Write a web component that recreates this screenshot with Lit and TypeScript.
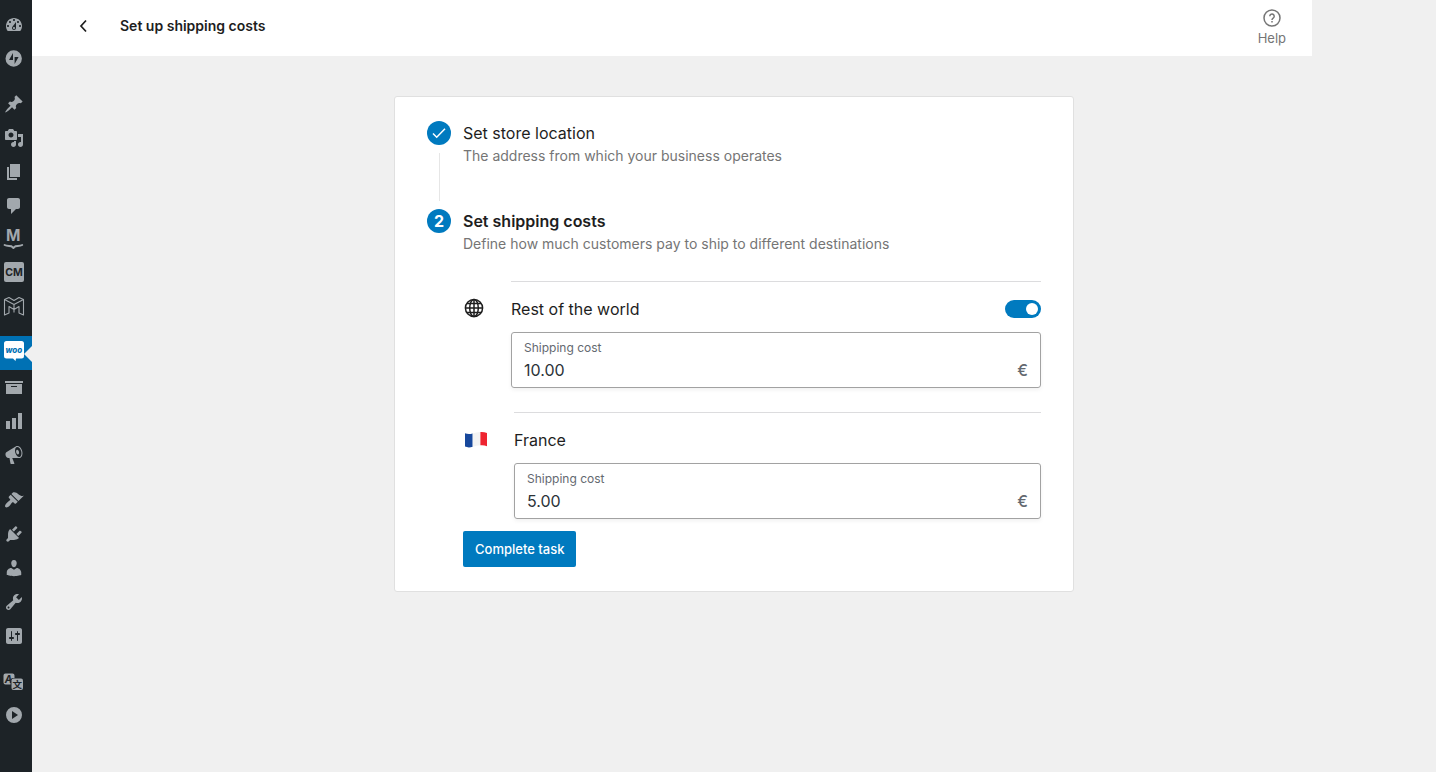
import { LitElement, html, svg, css } from "lit";
import { customElement, state } from "lit/decorators.js";
import { classMap } from "lit/directives/class-map.js";

type MenuItem = { label: string; icon: unknown; active?: boolean };

const path = (d: string) => svg`<path fill-rule="evenodd" d=${d}></path>`;

const MENU: MenuItem[][] = [
  [
    {
      label: "Dashboard",
      icon: path(
        "M3.76 16h12.48c1.1-1.37 1.76-3.11 1.76-5 0-4.42-3.58-8-8-8s-8 3.58-8 8c0 1.89.66 3.63 1.76 5zM10 4c.55 0 1 .45 1 1s-.45 1-1 1-1-.45-1-1 .45-1 1-1zM6 6c.55 0 1 .45 1 1s-.45 1-1 1-1-.45-1-1 .45-1 1-1zm8 0c.55 0 1 .45 1 1s-.45 1-1 1-1-.45-1-1 .45-1 1-1zm-5.37 5.55L12 7v6c0 1.1-.9 2-2 2s-2-.9-2-2c0-.57.24-1.08.63-1.45zM4 10c.55 0 1 .45 1 1s-.45 1-1 1-1-.45-1-1 .45-1 1-1zm12 0c.55 0 1 .45 1 1s-.45 1-1 1-1-.45-1-1 .45-1 1-1zm-5 3c0-.55-.45-1-1-1s-1 .45-1 1 .45 1 1 1 1-.45 1-1z",
      ),
    },
    {
      label: "Jetpack",
      icon: path(
        "M9.700 1.3a8.2 8.2 0 1 0 0 16.4a8.2 8.2 0 1 0 0-16.4zM9 4V11H5zM10.600 15V8h4z",
      ),
    },
  ],
  [
    {
      label: "Posts",
      icon: path(
        "M10.440 3.020l1.820-1.820 6.360 6.350-1.830 1.820c-1.050-.680-2.480-.570-3.410.360l-.750.750c-.920.930-1.040 2.350-.350 3.410l-1.830 1.820-2.410-2.410-2.800 2.790c-.420.420-3.380 2.710-3.800 2.290s1.860-3.390 2.280-3.810l2.790-2.790L4.100 9.360l1.830-1.820c1.050.690 2.480.570 3.400-.360l.750-.750c.930-.920 1.050-2.350.360-3.410z",
      ),
    },
    {
      label: "Media",
      icon: path(
        "M13 11V4c0-.55-.45-1-1-1h-1.670L9 1H5L3.670 3H2c-.55 0-1 .45-1 1v7c0 .55.45 1 1 1h10c.55 0 1-.45 1-1zM7 4.500c1.380 0 2.500 1.120 2.500 2.500S8.380 9.500 7 9.500 4.500 8.380 4.500 7 5.620 4.500 7 4.500zM14 6h5v10.500c0 1.380-1.120 2.500-2.500 2.500S14 17.880 14 16.500s1.120-2.500 2.500-2.500c.17 0 .34.02.5.05V9h-3V6zm-4 8.050V13h2v3.500c0 1.380-1.120 2.500-2.500 2.500S7 17.880 7 16.500 8.120 14 9.500 14c.17 0 .34.02.5.05z",
      ),
    },
    { label: "Pages", icon: path("M6 15V2h10v13H6zm-1 1h8v2H3V5h2v11z") },
    {
      label: "Comments",
      icon: path(
        "M5 2h9c1.100 0 2 .9 2 2v7c0 1.100-.9 2-2 2h-2l-5 5v-5H5c-1.100 0-2-.9-2-2V4c0-1.100.9-2 2-2z",
      ),
    },
    {
      label: "MailPoet",
      icon: svg`
        <text x="9.200" y="11" font-size="15.500" font-weight="700" text-anchor="middle">M</text>
        <path fill="none" stroke="currentColor" stroke-width="2" stroke-linecap="round" stroke-linejoin="round"
          d="M.6 15c2.500 1.400 5 .6 6.800 1.200l2 1.700 2-1.700c1.800-.6 4.300.2 6.800-1.200"></path>`,
    },
    {
      label: "Customers",
      icon: svg`
        <rect x="0" y="-2" width="20" height="20" rx="2"></rect>
        <text class="cutout" x="10" y="12" font-size="10.500" font-weight="700" text-anchor="middle">CM</text>`,
    },
    {
      label: "Mailchimp",
      icon: svg`<path fill="none" stroke="currentColor" stroke-width="1.100" stroke-linejoin="round"
        d="M.5 1.500L5-.500l5 3 5-3 4.500 2V17L15 15V8.500L10 11.500 5 8.500V15L.5 17zM.5 1.500L10 6.500l9.500-5M10 6.500v8"></path>`,
    },
  ],
  [
    {
      label: "WooCommerce",
      active: true,
      icon: svg`
        <path d="M2.500-2h15A2.500 2.500 0 0 1 20 .5v12.500a2.500 2.500 0 0 1-2.500 2.500H12l-.5 2.500L9 15.500H2.500A2.500 2.500 0 0 1 0 13V.5A2.500 2.500 0 0 1 2.500-2z"></path>
        <text class="brand" x="9.800" y="9.500" font-size="8" font-style="italic" font-weight="800" text-anchor="middle">woo</text>`,
    },
    { label: "Products", icon: path("M19 4v2H1V4h18zM2 7h16v10H2V7zm11 3V9H7v1h6z") },
    { label: "Analytics", icon: path("M18 18V2h-4v16h4zm-6 0V7H8v11h4zm-6 0v-8H2v8h4z") },
    {
      label: "Marketing",
      icon: path(
        "M18.150 5.940c.46 1.620.38 3.220-.02 4.480-.42 1.280-1.260 2.180-2.300 2.480-.16.06-.26.06-.4.06-.06.02-.12.02-.18.02-.06.02-.14.02-.22.02h-6.800l2.220 5.500c.02.14-.06.26-.14.34-.08.1-.24.16-.34.16H6.950c-.1 0-.26-.06-.34-.16-.08-.08-.16-.2-.14-.34l-1-5.500H4.250l-.02-.02c-.5.06-1.080-.18-1.540-.62s-.88-1.080-1.060-1.880c-.24-.8-.2-1.560-.02-2.200.18-.62.58-1.080 1.060-1.300l.02-.02 9-5.400c.1-.06.18-.1.24-.16.06-.04.14-.08.24-.12.16-.08.28-.12.5-.18 1.040-.3 2.240.1 3.220.98s1.840 2.240 2.260 3.860zm-2.580 5.980h-.02c.4-.1.74-.34 1.040-.7.58-.7.86-1.760.86-3.040 0-.64-.1-1.300-.28-1.980-.34-1.360-1.020-2.500-1.780-3.240s-1.680-1.100-2.460-.88c-.82.22-1.400.96-1.700 2-.32 1.040-.28 2.360.06 3.720.38 1.360 1 2.500 1.800 3.240.78.74 1.620 1.100 2.480.88zm-2.540-7.080c.22-.04.42-.02.62.04.38.16.76.48 1.020 1s.42 1.200.42 1.780c0 .3-.04.56-.12.8-.18.48-.44.84-.86.94-.34.1-.8-.06-1.140-.4s-.64-.86-.78-1.500c-.18-.62-.12-1.240.02-1.720s.48-.84.82-.94z",
      ),
    },
  ],
  [
    {
      label: "Appearance",
      icon: path(
        "M14.480 11.060L7.410 3.990l1.500-1.500c.5-.56 2.300-.47 3.510.32 1.210.8 1.430 1.280 2.910 2.100 1.180.64 2.450 1.260 4.450.85zm-.71.71L6.700 4.700 4.930 6.470c-.39.39-.39 1.020 0 1.410l1.060 1.060c.39.39.39 1.030 0 1.420-.6.6-1.430 1.110-2.210 1.690-.35.26-.7.53-1.010.84C1.430 14.230.4 16.080 1.400 17.070c.99 1 2.840-.03 4.180-1.360.31-.31.58-.66.85-1.020.57-.78 1.080-1.610 1.690-2.210.39-.39 1.020-.39 1.410 0l1.060 1.060c.39.39 1.020.39 1.410 0z",
      ),
    },
    {
      label: "Plugins",
      icon: path(
        "M13.110 4.360L9.870 7.600 8 5.730l3.240-3.240c.35-.34 1.050-.2 1.560.32.52.51.66 1.210.31 1.550zm-8 1.770l.91-1.120 9.010 9.010-1.190.84c-.71.71-2.630 1.160-3.820 1.160H6.140L4.900 17.260c-.59.59-1.540.59-2.120 0-.59-.58-.59-1.530 0-2.120l1.240-1.240v-3.880c0-1.130.4-3.190 1.090-3.890zm7.260 3.970l3.240-3.240c.34-.35 1.040-.21 1.550.31.52.51.66 1.210.31 1.550l-3.240 3.250z",
      ),
    },
    {
      label: "Users",
      icon: path(
        "M10 9.250c-2.270 0-2.730-3.440-2.730-3.440C7 4.020 7.820 2 9.970 2c2.160 0 2.980 2.020 2.710 3.810 0 0-.41 3.440-2.680 3.440zm0 2.570L12.720 10c2.390 0 4.520 2.330 4.520 4.530v2.490s-3.650 1.130-7.240 1.130c-3.650 0-7.240-1.130-7.240-1.130v-2.490c0-2.250 1.940-4.480 4.470-4.480z",
      ),
    },
    {
      label: "Tools",
      icon: path(
        "M16.680 9.770c-1.340 1.340-3.300 1.670-4.950.99l-5.410 6.520c-.99.99-2.590.99-3.580 0s-.99-2.590 0-3.570l6.520-5.420c-.68-1.650-.35-3.610.99-4.950 1.280-1.280 3.120-1.620 4.720-1.060l-2.890 2.890 2.820 2.820 2.860-2.870c.53 1.580.18 3.390-1.080 4.650zM3.810 16.210c.4.39 1.040.39 1.430 0 .4-.4.4-1.040 0-1.430-.39-.4-1.030-.4-1.430 0-.39.39-.39 1.030 0 1.430z",
      ),
    },
    {
      label: "Settings",
      icon: path(
        "M18 16V4c0-1.100-.9-2-2-2H4c-1.100 0-2 .9-2 2v12c0 1.100.9 2 2 2h12c1.100 0 2-.9 2-2zM8 11h1c.55 0 1 .45 1 1s-.45 1-1 1H8v1.500c0 .28-.22.5-.5.5s-.5-.22-.5-.5V13H6c-.55 0-1-.45-1-1s.45-1 1-1h1V5.500c0-.28.22-.5.5-.5s.5.22.5.5V11zm5-2h-1c-.55 0-1-.45-1-1s.45-1 1-1h1V5.500c0-.28.22-.5.5-.5s.5.22.5.5V7h1c.55 0 1 .45 1 1s-.45 1-1 1h-1v5.500c0 .28-.22.5-.5.5s-.5-.22-.5-.5V9z",
      ),
    },
  ],
  [
    {
      label: "Translate",
      icon: svg`
        <path d="M1.500 2.500h7a2 2 0 0 1 2 2V7H9a2.500 2.500 0 0 0-2.500 2.500v4h-5a2 2 0 0 1-2-2v-7a2 2 0 0 1 2-2z"></path>
        <text class="cutout" x="4.500" y="11.500" font-size="10" font-weight="700" font-style="italic" text-anchor="middle">A</text>
        <rect x="7.500" y="7.500" width="11.500" height="11.500" rx="2"></rect>
        <text class="cutout" x="13.200" y="16.800" font-size="9.500" font-weight="700" text-anchor="middle">文</text>`,
    },
    {
      label: "Collapse menu",
      icon: path("M10 2a8 8 0 1 0 0 16a8 8 0 1 0 0-16zM8 6v8l6-4z"),
    },
  ],
];

@customElement("admin-menu")
class AdminMenu extends LitElement {
  static styles = css`
    :host {
      display: block;
      flex: none;
      width: 32px;
      background: #1d2327;
      color: #a2a8ad;
    }
    .menu {
      display: flex;
      flex-direction: column;
      gap: 11px;
      padding: 8px 0;
    }
    .item {
      position: relative;
      display: flex;
      align-items: center;
      height: 34px;
      padding-left: 4px;
      color: inherit;
    }
    .item.active {
      background: #0071b4;
      color: #fff;
    }
    .item.active::after {
      content: "";
      position: absolute;
      right: 0;
      top: 10px;
      border: 8px solid transparent;
      border-left: 0;
      border-right-color: #f0f0f0;
    }
    .icon {
      display: block;
      width: 20px;
      height: 20px;
      overflow: visible;
      fill: currentColor;
      font-family: Inter, "Noto Sans CJK SC", sans-serif;
    }
    .cutout {
      fill: #1d2327;
    }
    .brand {
      fill: #0071b4;
    }
  `;

  render() {
    return html`<nav class="menu" aria-label="Main menu">
      ${MENU.map(
        (group) => html`<div>
          ${group.map(
            (item) => html`<a class=${classMap({ item: true, active: !!item.active })} href="#" aria-label=${item.label}>
              <svg class="icon" viewBox="0 0 20 20" aria-hidden="true">${item.icon}</svg>
            </a>`,
          )}
        </div>`,
      )}
    </nav>`;
  }
}

const globe = html`<svg width="24" height="24" viewBox="0 0 24 24" fill="none" stroke="#1e1e1e" stroke-width="1.500" aria-hidden="true">
  <circle cx="11" cy="11" r="8.600"></circle>
  <ellipse cx="11" cy="11" rx="4.300" ry="8.600"></ellipse>
  <path d="M11 2.400v17.200M2.400 11h17.200M3.900 6.400h14.200M3.900 15.600h14.200"></path>
</svg>`;

const flag = html`<svg width="27" height="24" viewBox="0 0 27 24" aria-hidden="true">
  <path fill="#17489c" d="M2 5.200c2.500 1 5 .9 7.700.2v13.400c-2.700.8-5.200.9-7.700-.2z"></path>
  <path fill="#f3f3f3" d="M9.700 5.400c2.500-.7 5-1.500 7.700-1.400v13.300c-2.700 0-5.200.8-7.700 1.500z"></path>
  <path fill="#ee2430" d="M17.400 4c2.500-.2 4.500.2 6.600 1v13.200c-2.100-.9-4.100-1.100-6.600-.9z"></path>
</svg>`;

@customElement("app-root")
class AppRoot extends LitElement {
  @state() private restOfWorld = true;

  static styles = css`
    :host {
      display: flex;
      min-height: 100vh;
      background: #f0f0f0;
      color: #1e1e1e;
      font-family: Inter, sans-serif;
      font-size: 16px;
      line-height: 24px;
    }
    * {
      box-sizing: border-box;
    }
    h1,
    h2,
    h3,
    p,
    ol {
      margin: 0;
      padding: 0;
      font-size: inherit;
      font-weight: inherit;
    }
    button,
    input {
      font: inherit;
      color: inherit;
      border: 0;
      padding: 0;
      margin: 0;
      background: none;
    }
    .main {
      flex: 1;
      min-width: 0;
    }
    .header {
      display: flex;
      align-items: center;
      height: 56px;
      margin-right: 124px;
      padding: 0 26px 0 40px;
      background: #fff;
    }
    .back,
    .page-title {
      margin-bottom: 4px;
    }
    .back {
      display: flex;
      width: 24px;
      height: 24px;
      margin-right: 24px;
    }
    .page-title {
      flex: 1;
      font-size: 14px;
      font-weight: 600;
    }
    .help {
      display: flex;
      flex-direction: column;
      align-items: center;
      font-size: 13px;
      line-height: 20px;
      color: #757575;
    }
    .content {
      padding: 40px 16px;
    }
    .card {
      max-width: 680px;
      margin: 0 auto;
      padding: 24px 32px;
      background: #fff;
      border: 1px solid #e0e0e0;
      border-radius: 3px;
    }
    .steps {
      list-style: none;
    }
    .step {
      display: grid;
      grid-template-columns: 24px 1fr;
      column-gap: 12px;
    }
    .rail {
      display: flex;
      flex-direction: column;
      align-items: center;
    }
    .badge {
      display: flex;
      align-items: center;
      justify-content: center;
      width: 24px;
      height: 24px;
      border-radius: 50%;
      background: #007abf;
      color: #fff;
      font-weight: 700;
    }
    .connector {
      width: 1px;
      height: 48px;
      margin: 8px 0;
      background: #e6e6e6;
    }
    .current {
      font-weight: 600;
    }
    .description {
      font-size: 14px;
      line-height: 22px;
      color: #757575;
    }
    .zones {
      display: flex;
      flex-direction: column;
      gap: 24px;
      margin: 26px 0 12px;
    }
    .zone {
      display: flex;
      gap: 24px;
    }
    .zone-icon {
      display: flex;
      padding-top: 16px;
    }
    .zone-body {
      flex: 1;
      min-width: 0;
      padding-top: 15px;
      border-top: 1px solid #dcdcde;
    }
    .zone-head {
      display: flex;
      align-items: center;
      justify-content: space-between;
      margin-bottom: 11px;
    }
    .toggle {
      appearance: none;
      display: flex;
      width: 36px;
      height: 18px;
      padding: 3px;
      border-radius: 9px;
      background: #949494;
      cursor: pointer;
    }
    .toggle::before {
      content: "";
      width: 12px;
      height: 12px;
      border-radius: 50%;
      background: #fff;
    }
    .toggle:checked {
      justify-content: flex-end;
      background: #007abf;
    }
    .field {
      display: grid;
      grid-template-columns: 1fr auto;
      grid-template-rows: 18px 26px;
      align-items: center;
      padding: 6px 12px 4px;
      border: 1px solid #a2a2a2;
      border-radius: 3px;
      box-shadow: 0 2px 4px rgba(0, 0, 0, 0.06);
    }
    .field-label {
      grid-column: 1 / -1;
      font-size: 12px;
      line-height: 20px;
      color: #646970;
    }
    .field-input {
      min-width: 0;
      height: 24px;
      outline: none;
      color: #2c3338;
    }
    .currency {
      color: #646970;
      font-weight: 500;
    }
    .submit {
      height: 36px;
      padding: 0 12px;
      border-radius: 2px;
      background: #007abf;
      color: #fff;
      font-size: 13px;
      font-weight: 500;
      cursor: pointer;
    }
  `;

  private field(id: string, value: string) {
    return html`<div class="field">
      <label class="field-label" for=${id}>Shipping cost</label>
      <input class="field-input" id=${id} type="text" .value=${value} />
      <span class="currency">€</span>
    </div>`;
  }

  render() {
    return html`
      <admin-menu></admin-menu>
      <div class="main">
        <header class="header">
          <button class="back" aria-label="Back">
            <svg width="24" height="24" viewBox="0 0 24 24" fill="none" stroke="#1e1e1e" stroke-width="1.700" aria-hidden="true">
              <path d="M14 6.500L9 12l5 5.500"></path>
            </svg>
          </button>
          <h1 class="page-title">Set up shipping costs</h1>
          <button class="help">
            <svg width="20" height="20" viewBox="0 0 20 20" fill="none" stroke="currentColor" stroke-width="1.500" aria-hidden="true">
              <circle cx="10" cy="10" r="8"></circle>
              <path d="M7.800 8.300A2.200 2.200 0 1 1 11.300 10c-.8.600-1.300.9-1.300 1.900M10 13v1.500"></path>
            </svg>
            Help
          </button>
        </header>
        <main class="content">
          <section class="card">
            <ol class="steps">
              <li class="step">
                <div class="rail">
                  <span class="badge">
                    <svg width="18" height="18" viewBox="0 0 18 18" fill="none" stroke="#fff" stroke-width="1.500" aria-hidden="true">
                      <path d="M3 9.500L6.700 13.200 15 4.800"></path>
                    </svg>
                  </span>
                  <span class="connector"></span>
                </div>
                <div>
                  <h2>Set store location</h2>
                  <p class="description">The address from which your business operates</p>
                </div>
              </li>
              <li class="step">
                <div class="rail"><span class="badge">2</span></div>
                <div>
                  <h2 class="current">Set shipping costs</h2>
                  <p class="description">Define how much customers pay to ship to different destinations</p>
                  <div class="zones">
                    <div class="zone">
                      <div class="zone-icon">${globe}</div>
                      <div class="zone-body">
                        <div class="zone-head">
                          <h3><label for="rest-toggle">Rest of the world</label></h3>
                          <input
                            class="toggle"
                            id="rest-toggle"
                            type="checkbox"
                            role="switch"
                            .checked=${this.restOfWorld}
                            @change=${(e: Event) => (this.restOfWorld = (e.target as HTMLInputElement).checked)}
                          />
                        </div>
                        ${this.field("cost-rest", "10.00")}
                      </div>
                    </div>
                    <div class="zone">
                      <div class="zone-icon">${flag}</div>
                      <div class="zone-body">
                        <div class="zone-head"><h3>France</h3></div>
                        ${this.field("cost-france", "5.00")}
                      </div>
                    </div>
                  </div>
                  <button class="submit">Complete task</button>
                </div>
              </li>
            </ol>
          </section>
        </main>
      </div>
    `;
  }
}
